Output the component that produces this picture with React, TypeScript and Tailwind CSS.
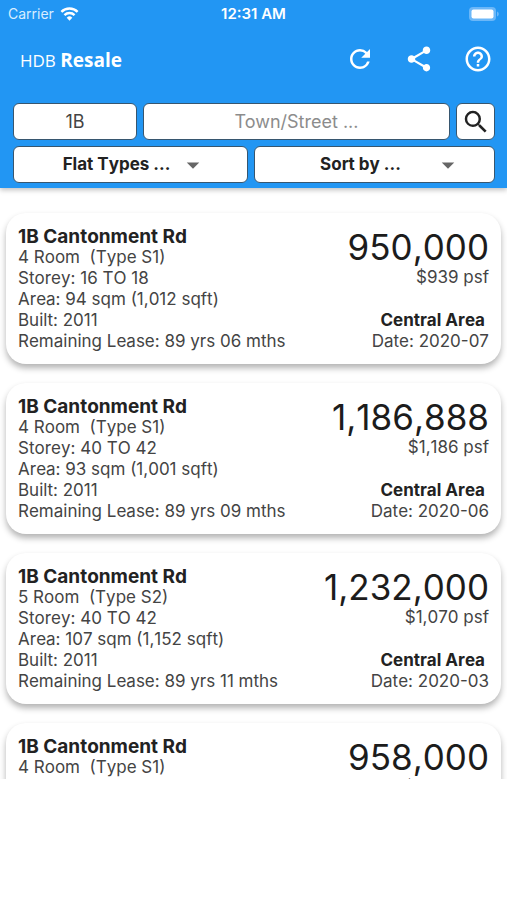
import React from "react";
import { MdArrowDropDown, MdHelpOutline, MdRefresh, MdSearch, MdShare } from "react-icons/md";

type Sale = {
  address: string;
  flat: string;
  storey: string;
  area: string;
  built: string;
  lease: string;
  price: string;
  psf: string;
  town: string;
  date: string;
};

const sales: Sale[] = [
  { address: "1B Cantonment Rd", flat: "4 Room  (Type S1)", storey: "16 TO 18", area: "94 sqm (1,012 sqft)", built: "2011", lease: "89 yrs 06 mths", price: "950,000", psf: "$939 psf", town: "Central Area", date: "2020-07" },
  { address: "1B Cantonment Rd", flat: "4 Room  (Type S1)", storey: "40 TO 42", area: "93 sqm (1,001 sqft)", built: "2011", lease: "89 yrs 09 mths", price: "1,186,888", psf: "$1,186 psf", town: "Central Area", date: "2020-06" },
  { address: "1B Cantonment Rd", flat: "5 Room  (Type S2)", storey: "40 TO 42", area: "107 sqm (1,152 sqft)", built: "2011", lease: "89 yrs 11 mths", price: "1,232,000", psf: "$1,070 psf", town: "Central Area", date: "2020-03" },
  { address: "1B Cantonment Rd", flat: "4 Room  (Type S1)", storey: "16 TO 18", area: "93 sqm (1,001 sqft)", built: "2011", lease: "90 yrs 00 mths", price: "958,000", psf: "$1,030 psf", town: "Central Area", date: "2020-02" },
];

function StatusBar() {
  return (
    <div className="grid h-7 grid-cols-3 items-center px-2 text-[15px] leading-5">
      <div className="flex items-center gap-1.5">
        <span className="text-sm text-[#d8edff]">Carrier</span>
        <svg viewBox="0 0 20 15" className="h-3.5 w-[19px]" fill="none" stroke="currentColor" strokeWidth="2.6" aria-hidden="true">
          <path d="M1.3 5.2a12.4 12.4 0 0 1 17.4 0" />
          <path d="M4.6 8.7a7.7 7.7 0 0 1 10.8 0" />
          <path d="M10 14.6 7 11.4a4.4 4.4 0 0 1 6 0z" fill="currentColor" stroke="none" />
        </svg>
      </div>
      <div className="text-center font-semibold">12:31 AM</div>
      <svg viewBox="0 0 30 14" className="h-3.5 w-[30px] justify-self-end" aria-hidden="true">
        <rect x="0" y="0" width="27" height="14" rx="4" fill="#6bb7f8" />
        <rect x="2.5" y="2.5" width="22" height="9" rx="2" fill="#fff" />
        <path d="M28 4.5c2.4.8 2.4 4.2 0 5z" fill="#6bb7f8" />
      </svg>
    </div>
  );
}

const box = "h-[37px] min-w-0 rounded-md border border-[#37566f] bg-white text-[#222]";

function Dropdown({ label, arrow }: { label: string; arrow: string }) {
  return (
    <div className="relative grid min-w-0">
      <select aria-label={label} className={`${box} w-full appearance-none pr-7 text-[17px] font-bold [font-kerning:none] [text-align-last:center]`}>
        <option>{label}</option>
      </select>
      <MdArrowDropDown size={30} className={`pointer-events-none absolute top-1 text-[#666] ${arrow}`} aria-hidden="true" />
    </div>
  );
}

function SaleCard({ sale }: { sale: Sale }) {
  return (
    <li className="flex justify-between rounded-[20px] bg-white px-3 pt-[14px] pb-3 text-[17px] leading-[21px] text-[#444] shadow-[0_4px_6px_rgba(0,0,0,0.3)] [font-kerning:none]">
      <div className="whitespace-pre">
        <h2 className="text-[19px] leading-5 font-bold text-[#222]">{sale.address}</h2>
        <p>{sale.flat}</p>
        <p>Storey: {sale.storey}</p>
        <p>Area: {sale.area}</p>
        <p>Built: {sale.built}</p>
        <p>Remaining Lease: {sale.lease}</p>
      </div>
      <div className="flex flex-col items-end">
        <p className="text-[35px] leading-10 text-[#1c1c1c]">{sale.price}</p>
        <p>{sale.psf}</p>
        <p className="mt-auto pr-1 font-bold text-[#222]">{sale.town}</p>
        <p>Date: {sale.date}</p>
      </div>
    </li>
  );
}

export default function App() {
  return (
    <div className="flex h-screen flex-col bg-white font-['Inter','Liberation_Sans',sans-serif]">
      <header className="z-10 bg-[#2296f3] pb-[5px] text-white shadow-[0_2px_5px_rgba(0,0,0,0.25)]">
        <StatusBar />
        <div className="flex h-[62px] items-center justify-between pr-3.5 pl-5">
          <h1 className="pt-0.5 font-['Open_Sans','Noto_Sans',sans-serif] text-[17px]">
            HDB <span className="text-[19px] font-bold">Resale</span>
          </h1>
          <div className="flex gap-[29px]">
            <button type="button" aria-label="Refresh"><MdRefresh size={30} /></button>
            <button type="button" aria-label="Share"><MdShare size={30} /></button>
            <button type="button" aria-label="Help"><MdHelpOutline size={30} /></button>
          </div>
        </div>
        <form className="mt-[13px] flex flex-col gap-1.5 pr-3 pl-[13px]" onSubmit={(e) => e.preventDefault()}>
          <div className="flex gap-1.5">
            <input aria-label="Block" defaultValue="1B" className={`${box} flex-[2] text-center text-[18px] text-[#444]`} />
            <input aria-label="Town or street" placeholder="Town/Street ..." className={`${box} flex-[5] text-center text-[18px] placeholder:text-[#8c8c8c]`} />
            <button type="submit" aria-label="Search" className={`${box} flex w-[39px] items-center justify-center`}><MdSearch size={30} className="shrink-0" /></button>
          </div>
          <div className="grid grid-cols-[39fr_40fr] gap-1.5">
            <Dropdown label="Flat Types ..." arrow="right-10" />
            <Dropdown label="Sort by ..." arrow="right-8" />
          </div>
        </form>
      </header>
      <main className="min-h-0 flex-1 overflow-y-auto px-1.5 pt-[25px] [scrollbar-width:none]">
        <ul className="grid gap-[19px]">
          {sales.map((sale, i) => <SaleCard key={i} sale={sale} />)}
        </ul>
      </main>
      <div className="h-[121px] shrink-0" />
    </div>
  );
}
